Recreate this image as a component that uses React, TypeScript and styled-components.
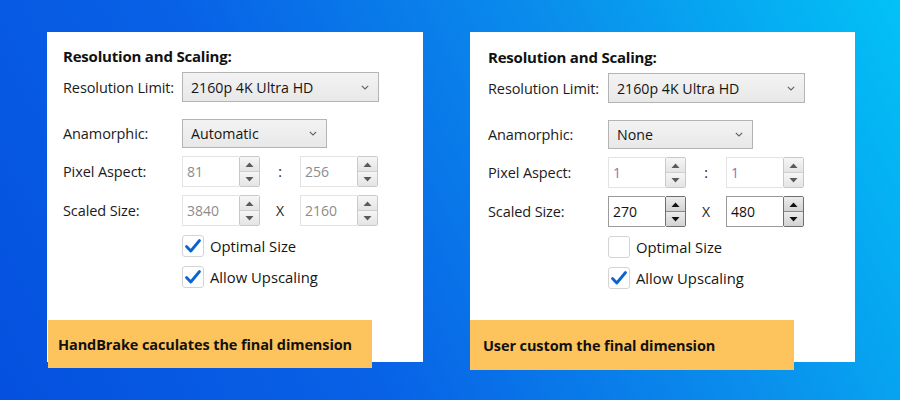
import React from "react";
import styled, { createGlobalStyle } from "styled-components";

const Global = createGlobalStyle`
  html, body { margin: 0; padding: 0; }
  body { font-family: "Open Sans", "Noto Sans", sans-serif; }
`;

const Stage = styled.div`
  width: 900px;
  height: 400px;
  box-sizing: border-box;
  padding: 32px 0 0 47px;
  display: flex;
  gap: 47px;
  align-items: flex-start;
  background: linear-gradient(62deg, #0550df 0%, #0862e6 35%, #0a8eec 68%, #02c2f6 100%);
  overflow: hidden;
`;

const Panel = styled.div<{ $w: number; $pl: number; $pt: number; $ctl: number }>`
  width: ${(p) => p.$w}px;
  height: 330px;
  background: #fff;
  display: flex;
  flex-direction: column;
  box-sizing: border-box;
  padding: ${(p) => p.$pt}px 0 0 ${(p) => p.$pl}px;
  --ctl: ${(p) => p.$ctl}px;
`;

const Title = styled.div`
  font-weight: 700;
  font-size: 15px;
  line-height: 20px;
  color: #111;
  letter-spacing: -0.2px;
`;

const Row = styled.div<{ $mt: number; $h: number }>`
  display: grid;
  grid-template-columns: var(--ctl) auto;
  align-items: center;
  margin-top: ${(p) => p.$mt}px;
  height: ${(p) => p.$h}px;
`;

const Label = styled.div`
  font-size: 14.5px;
  color: #1b1b1b;
  letter-spacing: -0.1px;
`;

const Select = styled.div<{ $w: number }>`
  width: ${(p) => p.$w}px;
  height: 100%;
  box-sizing: border-box;
  border: 1px solid #b4b4b4;
  background: linear-gradient(#f3f3f3, #e8e8e8);
  display: flex;
  align-items: center;
  justify-content: space-between;
  padding: 0 9px 0 8px;
  font-size: 14.2px;
  color: #151515;
`;

const Chevron = () => (
  <svg width="8" height="5" viewBox="0 0 8 5">
    <path d="M0.8 0.8 L4 4 L7.2 0.8" fill="none" stroke="#606060" strokeWidth="1.1" />
  </svg>
);

const SpinGroup = styled.div`
  display: flex;
  align-items: center;
`;

const Spin = styled.div`
  display: flex;
  height: 31px;
`;

const NumInput = styled.div<{ $active?: boolean; $tone: string }>`
  width: 57px;
  box-sizing: border-box;
  border: 1px solid ${(p) => (p.$active ? "#9a9a9a" : "#e3e3e3")};
  border-right: none;
  display: flex;
  align-items: center;
  padding-left: 4px;
  font-size: 14px;
  color: ${(p) => p.$tone};
  background: #fff;
`;

const Arrows = styled.div<{ $active?: boolean }>`
  width: 21px;
  box-sizing: border-box;
  border: 1px solid ${(p) => (p.$active ? "#6e6e6e" : "#c9c9c9")};
  border-radius: 2px;
  display: flex;
  flex-direction: column;
  overflow: hidden;
`;

const ArrowBtn = styled.div<{ $active?: boolean; $bottom?: boolean }>`
  flex: 1;
  display: flex;
  align-items: center;
  justify-content: center;
  background: ${(p) =>
    p.$active ? "linear-gradient(#ececec, #d2d2d2)" : "linear-gradient(#f6f6f6, #e4e4e4)"};
  border-top: ${(p) => (p.$bottom ? `1px solid ${p.$active ? "#8a8a8a" : "#cfcfcf"}` : "none")};
`;

const Tri = ({ up, active }: { up?: boolean; active?: boolean }) => (
  <svg width="9" height="5" viewBox="0 0 9 5">
    <path d={up ? "M0.5 5 L4.5 0.5 L8.5 5 Z" : "M0.5 0 L4.5 4.5 L8.5 0 Z"} fill={active ? "#111" : "#5a5a5a"} />
  </svg>
);

const Sep = styled.div`
  width: 40px;
  text-align: center;
  font-size: 14px;
  color: #222;
`;

const SpinBox = ({ value, active, tone }: { value: string; active?: boolean; tone: string }) => (
  <Spin>
    <NumInput $active={active} $tone={tone}>{value}</NumInput>
    <Arrows $active={active}>
      <ArrowBtn $active={active}><Tri up active={active} /></ArrowBtn>
      <ArrowBtn $active={active} $bottom><Tri active={active} /></ArrowBtn>
    </Arrows>
  </Spin>
);

const CheckRow = styled.div<{ $mt: number }>`
  display: flex;
  align-items: center;
  gap: 6px;
  margin-top: ${(p) => p.$mt}px;
  margin-left: var(--ctl);
  font-size: 14.8px;
  color: #151515;
`;

const Box = styled.div`
  width: 22px;
  height: 22px;
  box-sizing: border-box;
  border: 1px solid #d4d4d4;
  border-radius: 3px;
  background: #fff;
  display: flex;
  align-items: center;
  justify-content: center;
`;

const Check = () => (
  <svg width="18" height="16" viewBox="0 0 18 16">
    <path d="M2.5 8.5 L6.8 13 L15.5 2.5" fill="none" stroke="#0a64d0" strokeWidth="2.8" strokeLinecap="round" strokeLinejoin="round" />
  </svg>
);

const Caption = styled.div<{ $w: number; $h: number; $pl: number; $ml: number; $mb: number }>`
  margin-top: auto;
  margin-left: ${(p) => p.$ml}px;
  margin-bottom: ${(p) => p.$mb}px;
  width: ${(p) => p.$w}px;
  height: ${(p) => p.$h}px;
  flex-shrink: 0;
  box-sizing: border-box;
  background: #fdc35c;
  display: flex;
  align-items: center;
  padding-left: ${(p) => p.$pl}px;
  font-weight: 700;
  font-size: 14.5px;
  color: #111;
  letter-spacing: -0.1px;
`;

type Cfg = {
  w: number;
  pl: number;
  pt: number;
  ctl: number;
  mode: string;
  modeW: number;
  aspect: [string, string];
  aspectTone: string;
  size: [string, string];
  sizeActive: boolean;
  optimal: boolean;
  caption: string;
  capW: number;
  capH: number;
  capPl: number;
  capMl: number;
  capMb: number;
};

const Settings = ({ c }: { c: Cfg }) => (
  <Panel $w={c.w} $pl={c.pl} $pt={c.pt} $ctl={c.ctl}>
    <Title>Resolution and Scaling:</Title>
    <Row $mt={6} $h={30}>
      <Label>Resolution Limit:</Label>
      <Select $w={197}>
        <span>2160p 4K Ultra HD</span>
        <Chevron />
      </Select>
    </Row>
    <Row $mt={17} $h={29}>
      <Label>Anamorphic:</Label>
      <Select $w={c.modeW}>
        <span>{c.mode}</span>
        <Chevron />
      </Select>
    </Row>
    <Row $mt={8} $h={31}>
      <Label>Pixel Aspect:</Label>
      <SpinGroup>
        <SpinBox value={c.aspect[0]} tone={c.aspectTone} />
        <Sep>:</Sep>
        <SpinBox value={c.aspect[1]} tone={c.aspectTone} />
      </SpinGroup>
    </Row>
    <Row $mt={8} $h={31}>
      <Label>Scaled Size:</Label>
      <SpinGroup>
        <SpinBox value={c.size[0]} active={c.sizeActive} tone={c.sizeActive ? "#111" : "#8c8c8c"} />
        <Sep>X</Sep>
        <SpinBox value={c.size[1]} active={c.sizeActive} tone={c.sizeActive ? "#111" : "#8c8c8c"} />
      </SpinGroup>
    </Row>
    <CheckRow $mt={9}>
      <Box>{c.optimal && <Check />}</Box>
      <span>Optimal Size</span>
    </CheckRow>
    <CheckRow $mt={9}>
      <Box><Check /></Box>
      <span>Allow Upscaling</span>
    </CheckRow>
    <Caption $w={c.capW} $h={c.capH} $pl={c.capPl} $ml={c.capMl} $mb={c.capMb}>{c.caption}</Caption>
  </Panel>
);

const left: Cfg = {
  w: 376,
  pl: 16,
  pt: 14,
  ctl: 119,
  mode: "Automatic",
  modeW: 145,
  aspect: ["81", "256"],
  aspectTone: "#8c8c8c",
  size: ["3840", "2160"],
  sizeActive: false,
  optimal: true,
  caption: "HandBrake caculates the final dimension",
  capW: 324,
  capH: 48,
  capPl: 10,
  capMl: -15,
  capMb: -6,
};

const right: Cfg = {
  w: 385,
  pl: 18,
  pt: 15,
  ctl: 120,
  mode: "None",
  modeW: 145,
  aspect: ["1", "1"],
  aspectTone: "#9a6fb4",
  size: ["270", "480"],
  sizeActive: true,
  optimal: false,
  caption: "User custom the final dimension",
  capW: 324,
  capH: 50,
  capPl: 13,
  capMl: -18,
  capMb: -8,
};

export default function App() {
  return (
    <>
      <Global />
      <Stage>
        <Settings c={left} />
        <Settings c={right} />
      </Stage>
    </>
  );
}
